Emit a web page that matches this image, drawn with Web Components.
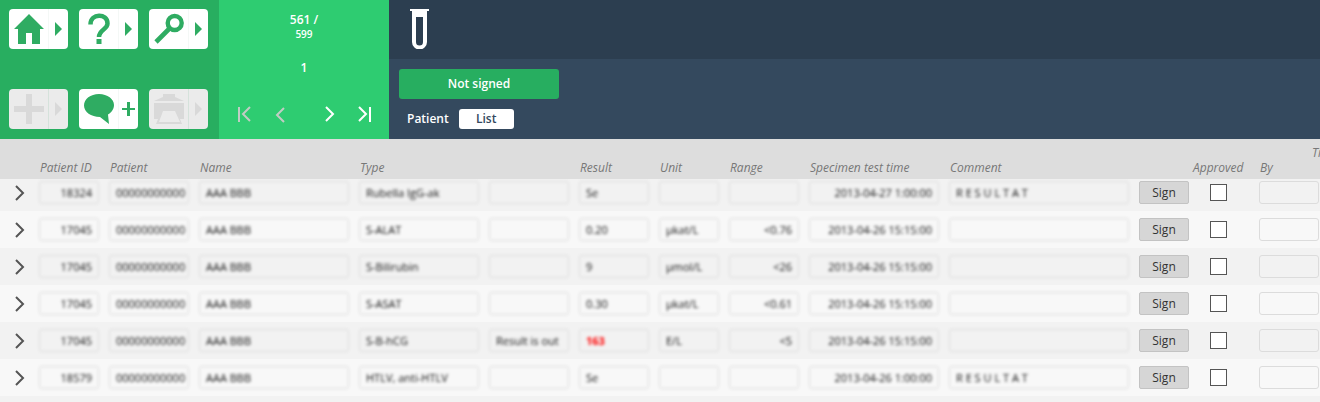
<!DOCTYPE html>
<html lang="en">
<head>
<meta charset="utf-8">
<title>Results</title>
<style>
  body {
    margin: 0;
    font-family: "Open Sans", "Noto Sans", sans-serif;
    font-size: 12px;
    line-height: 16px;
  }
</style>
</head>
<body>
<lab-app></lab-app>

<script>
const ICONS = {
  home: '<path d="M20 5 35 20H31V35H23V24H17V35H9V20H5Z"/>',
  help: '<path d="M11.500 15.500C11.500 4 28.500 4 28.500 14.500 28.500 20.500 20 20.500 20 28" fill="none" stroke="currentColor" stroke-width="4.500"/><path d="M17.500 30h5v5h-5z"/>',
  search: '<g fill="none" stroke="currentColor"><circle cx="25.700" cy="14" r="7" stroke-width="4.400"/><path d="M21 19 7 33" stroke-width="4.600"/></g>',
  add: '<path d="M17 5h6v12h12v6H23v12h-6V23H5v-6h12z"/>',
  comment: '<path d="M20 5c8.500 0 15 5 15 11 0 4-2.500 7.500-6 9.500l1 9.500-9-7C12 28 5 23 5 16.500 5 10 11.500 5 20 5z"/>',
  print: '<path d="M14 5h12v3l9 4H5l9-4zM5 14h30v16h-4l2 5H7l2-5H5z"/><path d="M14 22h12l5 11H10z" fill="#ebebeb"/>',
  more: '<path d="M7 13l7 7-7 7z"/>',
  plus: '<path d="M9 13h3v6h5v2h-5v6H9v-6H4v-2h5z"/>'
};

class ToolButton extends HTMLElement {
  constructor() {
    super();
    this.attachShadow({ mode: 'open' });
  }

  connectedCallback() {
    const label = this.getAttribute('label');
    const side = this.getAttribute('side') || 'more';
    const disabled = this.hasAttribute('disabled') ? 'disabled' : '';

    this.shadowRoot.innerHTML = `
      <style>
        :host {
          display: flex;
          height: 40px;
          border-radius: 4px;
          overflow: hidden;
          background: #fff;
          color: #2fac62;
        }

        :host([disabled]) {
          background: #ebebeb;
          color: #d9d9d9;
        }

        button {
          flex: 1;
          padding: 0;
          border: 0;
          background: none;
          color: inherit;
        }

        .side {
          flex: 0 0 20px;
          border-left: 1px solid #f4f8f6;
        }

        :host([disabled]) .side {
          border-left-color: #d5e2db;
        }

        svg {
          display: block;
          fill: currentColor;
        }
      </style>

      <button aria-label="${label}" ${disabled}>
        <svg width="39" height="40" viewBox="0 0 39 40">${ICONS[this.getAttribute('icon')]}</svg>
      </button>
      <button class="side" aria-label="${label} options" ${disabled}>
        <svg width="19" height="40" viewBox="1 0 19 40">${ICONS[side]}</svg>
      </button>
    `;
  }
}

class RecordPager extends HTMLElement {
  constructor() {
    super();
    this.attachShadow({ mode: 'open' });
  }

  connectedCallback() {
    this.shadowRoot.innerHTML = `
      <style>
        :host {
          display: flex;
          flex-direction: column;
          align-items: center;
          gap: 20px;
          box-sizing: border-box;
          padding: 12px 16px;
          background: #2ecc71;
          color: #fff;
          font-weight: 600;
          text-align: center;
        }

        small {
          display: block;
          font-size: 10px;
          line-height: 12px;
        }

        nav {
          display: flex;
          justify-content: space-between;
          align-self: stretch;
          margin-top: auto;
        }

        nav button {
          padding: 0;
          border: 0;
          background: none;
          color: #fff;
        }

        nav button:disabled {
          color: #c2ccc4;
        }

        nav button:nth-child(2) {
          margin-right: 14px;
        }

        svg {
          display: block;
          fill: none;
          stroke: currentColor;
          stroke-width: 2;
        }
      </style>

      <div>${this.getAttribute('current')} /<small>${this.getAttribute('total')}</small></div>
      <div>${this.getAttribute('page')}</div>
      <nav>
        <button aria-label="First" disabled><svg width="18" height="24"><path d="M4 4v15M15 4l-7 7 7 7"/></svg></button>
        <button aria-label="Previous" disabled><svg width="18" height="24"><path d="M14 5l-7 7 7 7"/></svg></button>
        <button aria-label="Next"><svg width="18" height="24"><path d="M6 4l7 7-7 7"/></svg></button>
        <button aria-label="Last"><svg width="18" height="24"><path d="M4 4l7 7-7 7M15 4v15"/></svg></button>
      </nav>
    `;
  }
}

class LabHeader extends HTMLElement {
  constructor() {
    super();
    this.attachShadow({ mode: 'open' });
  }

  connectedCallback() {
    this.shadowRoot.innerHTML = `
      <style>
        :host {
          display: flex;
          height: 139px;
        }

        .tools {
          flex: none;
          display: grid;
          grid-template-columns: repeat(3, 59px);
          column-gap: 11px;
          align-content: space-between;
          padding: 9px 11px 10px 9px;
          background: #28ae60;
        }

        record-pager {
          flex: 0 0 170px;
        }

        .context {
          flex: 1;
          display: flex;
          flex-direction: column;
          background: #34495e;
        }

        .module {
          height: 50px;
          padding: 9px 21px 0;
          background: #2c3e50;
        }

        .actions {
          display: flex;
          flex-direction: column;
          align-items: flex-start;
          gap: 10px;
          padding: 10px;
        }

        .view {
          display: flex;
          align-items: center;
          gap: 10px;
          padding-left: 8px;
          color: #fff;
          font-weight: 600;
        }

        button {
          border: 0;
          border-radius: 3px;
          padding: 0;
          font: inherit;
          font-weight: 600;
        }

        .status {
          width: 160px;
          height: 30px;
          background: #27ae60;
          color: #fff;
        }

        .list {
          width: 55px;
          height: 20px;
          background: #fff;
          color: #34495e;
        }
      </style>

      <div class="tools">
        <slot></slot>
      </div>
      <record-pager current="561" total="599" page="1"></record-pager>
      <div class="context">
        <div class="module">
          <svg width="19" height="40" viewBox="0 0 19 40">
            <path d="M0 0h19v2h-2v31a7.500 7.500 0 0 1-15 0V2H0zM6 8v25a3.500 3.500 0 0 0 7 0V8z" fill="#fff" fill-rule="evenodd"/>
          </svg>
        </div>
        <div class="actions">
          <button class="status">Not signed</button>
          <div class="view">
            <span>Patient</span>
            <button class="list">List</button>
          </div>
        </div>
      </div>
    `;
  }
}

// Read-only value box. "masked" softens the contents of private fields.
class FieldBox extends HTMLElement {
  constructor() {
    super();
    this.attachShadow({ mode: 'open' });
  }

  connectedCallback() {
    this.shadowRoot.innerHTML = `
      <style>
        :host {
          display: block;
        }

        :host([masked]) {
          filter: blur(1.5px);
        }

        input {
          display: block;
          box-sizing: border-box;
          width: 100%;
          height: 23px;
          padding: 0 2px 0 6px;
          border: 1px solid #dcdcdc;
          border-radius: 3px;
          background: none;
          color: #111;
          font: inherit;
          font-size: 11px;
          text-align: inherit;
        }

        :host([right]) input {
          padding-right: 6px;
          text-align: right;
        }

        :host([alert]) input {
          color: #f00;
          font-weight: 700;
        }
      </style>
      <input readonly>
    `;
    const input = this.shadowRoot.querySelector('input');
    input.value = this.getAttribute('value') || '';
    input.setAttribute('aria-label', this.getAttribute('label'));
  }
}

const COLUMNS = [
  { label: 'Patient ID', width: 70, right: true },
  { label: 'Patient', width: 90 },
  { label: 'Name', width: 160 },
  { label: 'Type', width: 130 },
  { label: '', width: 90 },
  { label: 'Result', width: 80 },
  { label: 'Unit', width: 70 },
  { label: 'Range', width: 80, right: true },
  { label: 'Specimen test time', width: 140, right: true },
  { label: 'Comment', width: 190 }
];

const ROWS = [
  ['18324', '00000000000', 'AAA BBB', 'Rubella IgG-ak', '', 'Se', '', '', '2013-04-27 1:00:00', 'R E S U L T A T'],
  ['17045', '00000000000', 'AAA BBB', 'S-ALAT', '', '0.20', 'µkat/L', '<0.76', '2013-04-26 15:15:00', ''],
  ['17045', '00000000000', 'AAA BBB', 'S-Bilirubin', '', '9', 'µmol/L', '<26', '2013-04-26 15:15:00', ''],
  ['17045', '00000000000', 'AAA BBB', 'S-ASAT', '', '0.30', 'µkat/L', '<0.61', '2013-04-26 15:15:00', ''],
  ['17045', '00000000000', 'AAA BBB', 'S-B-hCG', 'Result is out', '163', 'E/L', '<5', '2013-04-26 15:15:00', ''],
  ['18579', '00000000000', 'AAA BBB', 'HTLV, anti-HTLV', '', 'Se', '', '', '2013-04-26 1:00:00', 'R E S U L T A T']
];

class ResultTable extends HTMLElement {
  constructor() {
    super();
    this.attachShadow({ mode: 'open' });
  }

  connectedCallback() {
    this.render();
  }

  renderRow(row) {
    const cells = row.map((value, i) => {
      const col = COLUMNS[i];
      const flags = (col.right ? 'right ' : '') + (value === '163' ? 'alert' : '');
      return `<td><field-box masked ${flags} label="${col.label || 'Note'}" value="${value.replace('<', '&lt;')}"></field-box></td>`;
    }).join('');

    return `
      <tr>
        <td><button class="expand" aria-label="Expand row"><svg width="10" height="16"><path d="M1 1l7 7-7 7"/></svg></button></td>
        ${cells}
        <td><button class="sign">Sign</button></td>
        <td><input type="checkbox" aria-label="Approved"></td>
        <td><field-box label="By"></field-box></td>
        <td></td>
      </tr>`;
  }

  render() {
    this.shadowRoot.innerHTML = `
      <style>
        :host {
          display: block;
          overflow: hidden;
          background: #f2f2f2;
        }

        table {
          width: 1409px;
          table-layout: fixed;
          border-collapse: collapse;
        }

        th {
          height: 40px;
          padding: 0 0 3px 1px;
          box-sizing: border-box;
          background: #ddd;
          color: #777;
          font-weight: 400;
          font-style: italic;
          text-align: left;
          vertical-align: bottom;
          white-space: nowrap;
        }

        th.approved {
          padding-left: 0;
        }

        /* long heading that starts over the column before it */
        th.time {
          vertical-align: top;
          padding-top: 6px;
        }

        th.time span {
          margin-left: -8px;
        }

        td {
          padding: 7px 10px 7px 0;
          background: #f2f2f2;
        }

        tr:nth-child(even) td {
          background: #f8f8f8;
        }

        tbody tr:first-child td {
          padding-top: 2px;
        }

        button {
          display: block;
          padding: 0;
          font: inherit;
        }

        .expand {
          margin-left: 15px;
          border: 0;
          background: none;
        }

        .expand svg {
          display: block;
          fill: none;
          stroke: #555;
          stroke-width: 2;
        }

        td:nth-child(12) {
          padding-right: 4px;
        }

        .sign {
          width: 50px;
          height: 23px;
          border: 1px solid #c3c3c3;
          border-radius: 2px;
          background: #d6d6d6;
          color: #333;
        }

        input {
          display: block;
          appearance: none;
          box-sizing: border-box;
          width: 17px;
          height: 17px;
          margin: 0 0 0 17px;
          border: 1px solid #555;
          background: #fff;
        }

        td:nth-child(14) {
          padding-right: 0;
        }
      </style>

      <table>
        <colgroup>
          <col style="width: 39px">
          ${COLUMNS.map(c => `<col style="width: ${c.width}px">`).join('')}
          <col style="width: 54px">
          <col style="width: 66px">
          <col style="width: 60px">
          <col>
        </colgroup>
        <thead>
          <tr>
            <th></th>
            ${COLUMNS.map(c => `<th>${c.label}</th>`).join('')}
            <th></th>
            <th class="approved">Approved</th>
            <th>By</th>
            <th class="time"><span>Time</span></th>
          </tr>
        </thead>
        <tbody>${ROWS.map(row => this.renderRow(row)).join('')}</tbody>
      </table>
    `;
  }
}

class LabApp extends HTMLElement {
  constructor() {
    super();
    this.attachShadow({ mode: 'open' });
  }

  connectedCallback() {
    this.shadowRoot.innerHTML = `
      <style>
        :host {
          display: flex;
          flex-direction: column;
          min-height: 100vh;
        }

        result-table {
          flex: 1;
        }
      </style>

      <lab-header>
        <tool-button icon="home" label="Home"></tool-button>
        <tool-button icon="help" label="Help"></tool-button>
        <tool-button icon="search" label="Search"></tool-button>
        <tool-button icon="add" label="Add" disabled></tool-button>
        <tool-button icon="comment" side="plus" label="Comment"></tool-button>
        <tool-button icon="print" label="Print" disabled></tool-button>
      </lab-header>
      <result-table></result-table>
    `;
  }
}

customElements.define('tool-button', ToolButton);
customElements.define('record-pager', RecordPager);
customElements.define('lab-header', LabHeader);
customElements.define('field-box', FieldBox);
customElements.define('result-table', ResultTable);
customElements.define('lab-app', LabApp);
</script>
</body>
</html>
